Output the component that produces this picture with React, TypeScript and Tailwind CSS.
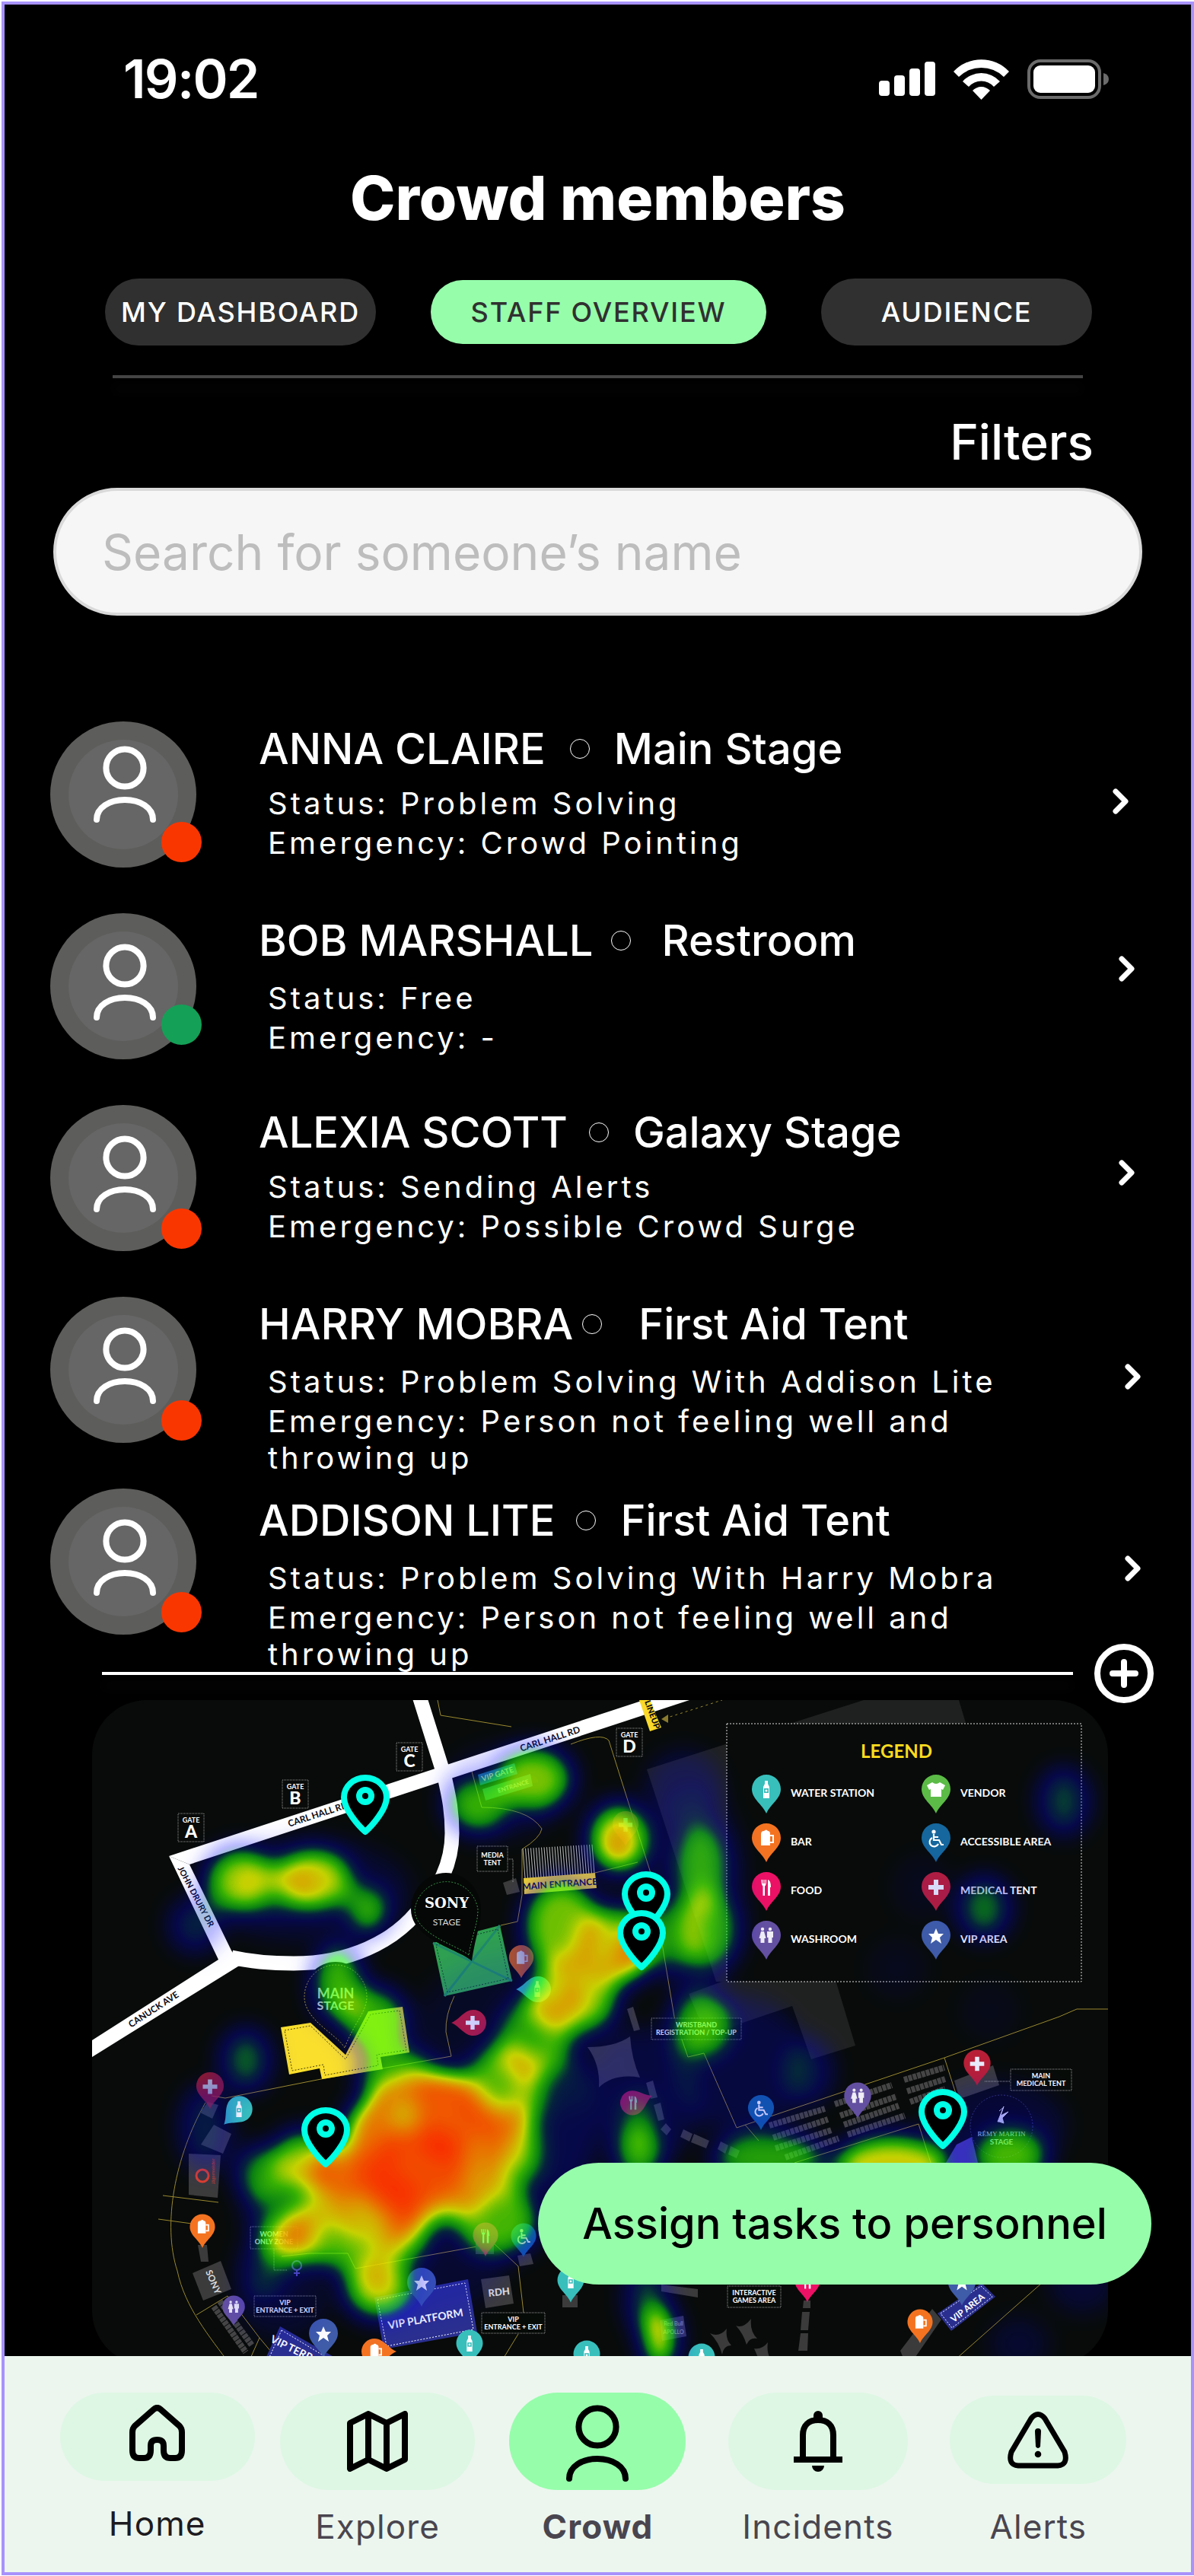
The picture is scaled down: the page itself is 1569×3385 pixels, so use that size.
import React, { useState } from 'react';
import clsx from 'clsx';

type PinKind = 'water' | 'bar' | 'food' | 'washroom' | 'vendor' | 'accessible' | 'medical' | 'vip';

interface Member {
  name: string;
  place: string;
  status: string;
  emergency: string;
  free?: boolean;
  iconClass: string;
  badgeClass: string;
  bodyClass: string;
  dotClass: string;
  detailsClass: string;
  chevronClass: string;
}

const members: Member[] = [
  {
    name: 'ANNA CLAIRE',
    place: 'Main Stage',
    status: 'Problem Solving',
    emergency: 'Crowd Pointing',
    iconClass: 'top-8',
    badgeClass: 'top-33',
    bodyClass: 'pt-0',
    dotClass: 'ml-8 mr-8',
    detailsClass: 'mt-3',
    chevronClass: 'mt-22 mr-4',
  },
  {
    name: 'BOB MARSHALL',
    place: 'Restroom',
    status: 'Free',
    emergency: '-',
    free: true,
    iconClass: 'top-10',
    badgeClass: 'top-30',
    bodyClass: 'pt-0',
    dotClass: 'ml-6 mr-10',
    detailsClass: 'mt-4',
    chevronClass: 'mt-14 mr-2',
  },
  {
    name: 'ALEXIA SCOTT',
    place: 'Galaxy Stage',
    status: 'Sending Alerts',
    emergency: 'Possible Crowd Surge',
    iconClass: 'top-10',
    badgeClass: 'top-34',
    bodyClass: 'pt-0',
    dotClass: 'ml-7 mr-8',
    detailsClass: 'mt-3',
    chevronClass: 'mt-18 mr-2',
  },
  {
    name: 'HARRY MOBRA',
    place: 'First Aid Tent',
    status: 'Problem Solving With Addison Lite',
    emergency: 'Person not feeling well and throwing up',
    iconClass: 'top-10',
    badgeClass: 'top-34',
    bodyClass: 'pt-0',
    dotClass: 'ml-3 mr-12',
    detailsClass: 'mt-4',
    chevronClass: 'mt-22',
  },
  {
    name: 'ADDISON LITE',
    place: 'First Aid Tent',
    status: 'Problem Solving With Harry Mobra',
    emergency: 'Person not feeling well and throwing up',
    iconClass: 'top-10',
    badgeClass: 'top-34',
    bodyClass: 'pt-1.5',
    dotClass: 'ml-7 mr-8',
    detailsClass: 'mt-4',
    chevronClass: 'mt-22',
  },
];

const pinColors: Record<PinKind, string> = {
  water: '#38bfbc',
  bar: '#f47321',
  food: '#ec1164',
  washroom: '#6450a1',
  vendor: '#5bbb46',
  accessible: '#15679d',
  medical: '#b91f36',
  vip: '#3f5ca8',
};

const PersonIcon: React.FC<{ className?: string }> = ({ className }) => (
  <svg viewBox="0 0 82 102" className={clsx('w-[82px]', className)} fill="none" stroke="currentColor" strokeWidth="8" strokeLinecap="round" aria-hidden="true">
    <circle cx="41" cy="29" r="24.6" />
    <path d="M4 97C4 81 21 71 41 71s37 10 37 26" />
  </svg>
);

const StatusBar: React.FC = () => (
  <div className="flex items-center justify-between pt-[58px] pr-[108px] pl-[156px] text-white">
    <span className="text-[70px] leading-[80px] font-semibold tracking-tight">19:02</span>
    <div className="flex items-center gap-6">
      <svg viewBox="0 0 74 46" className="w-[74px]" fill="currentColor" aria-hidden="true">
        <rect x="0" y="25" width="14" height="20" rx="4" />
        <rect x="20" y="18" width="14" height="27" rx="4" />
        <rect x="40" y="9" width="14" height="36" rx="4" />
        <rect x="60" y="0" width="14" height="45" rx="4" />
      </svg>
      <svg viewBox="0 0 73 53" className="w-[73px]" fill="currentColor" aria-hidden="true">
        <path d="M0 16A50 50 0 0 1 73 16L66 23A42 42 0 0 0 7 23z" />
        <path d="M12 29A33 33 0 0 1 61 29L53 36A22 22 0 0 0 20 36z" />
        <path d="M25 41A16 16 0 0 1 48 41L36.5 53z" />
      </svg>
      <svg viewBox="0 0 107 52" className="w-[107px]" aria-hidden="true">
        <rect x="2" y="2" width="93" height="48" rx="15" fill="none" stroke="#6b6b6b" strokeWidth="4" />
        <rect x="8" y="8" width="81" height="36" rx="9" fill="white" />
        <path d="M100 18q7 2 7 8t-7 8z" fill="#6b6b6b" />
      </svg>
    </div>
  </div>
);

const MemberRow: React.FC<{ member: Member }> = ({ member }) => (
  <li className="flex min-h-[252px] items-start">
    <div className="relative h-48 w-48 shrink-0 rounded-full bg-[#5d5d5b] p-6">
      <div className="h-36 w-36 rounded-full bg-[#666666]" />
      <PersonIcon className={clsx('absolute left-[57px] text-white', member.iconClass)} />
      <span
        className={clsx(
          'absolute left-[146px] h-[53px] w-[53px] rounded-full',
          member.free ? 'bg-[#14a057]' : 'bg-[#fa3600]',
          member.badgeClass
        )}
      />
    </div>
    <div className={clsx('ml-[82px] flex-1', member.bodyClass)}>
      <h2 className="flex items-center text-[56px] leading-[72px] font-medium whitespace-nowrap text-white">
        {member.name}
        <span className={clsx('h-[26px] w-[26px] rounded-full border border-white', member.dotClass)} />
        {member.place}
      </h2>
      <div className={clsx('ml-3 max-w-[1000px] text-[40px] leading-[48px] tracking-widest text-white', member.detailsClass)}>
        <p>Status: {member.status}</p>
        <p className="mt-1">Emergency: {member.emergency}</p>
      </div>
    </div>
    <button type="button" aria-label={`Open ${member.name}`} className={clsx('text-white', member.chevronClass)}>
      <svg viewBox="0 0 22 34" className="w-[22px]" fill="none" stroke="currentColor" strokeWidth="7" strokeLinecap="round" strokeLinejoin="round">
        <path d="M4 4l13 13L4 30" />
      </svg>
    </button>
  </li>
);

const PinGlyph: React.FC<{ kind: PinKind }> = ({ kind }) => {
  switch (kind) {
    case 'water':
      return (
        <g>
          <path d="M-2-12h4v4l2 4v15h-8V-4l2-4z" fill="white" />
          <path d="M-3-2h6v6h-6z" fill="#38bfbc" />
          <circle cy="1" r="1.5" fill="white" />
        </g>
      );
    case 'bar':
      return (
        <g>
          <path d="M-7-6q0-4 4-4 3-3 5 0 3 0 3 4v15h-12z" fill="white" />
          <path d="M5-4h4v9h-4" fill="none" stroke="white" strokeWidth="2" />
        </g>
      );
    case 'food':
      return (
        <g fill="white">
          <path d="M-6-10h1.200v5h1.200v-5h1.200v5h1.200v-5h1.200q0 8-2 8.500V11h-2.500V-1.500q-2-1-2-8.500z" />
          <path d="M2-10q4 1 4 10h-1v11H2z" />
        </g>
      );
    case 'washroom':
      return (
        <g fill="white" opacity=".9">
          <circle cx="-5" cy="-9" r="2.200" />
          <path d="M-7-6h4l2.500 9h-2v6h-5V3h-2z" />
          <circle cx="5" cy="-9" r="2.200" />
          <path d="M1-6h8v8h-1.500v7h-5V2H1z" />
        </g>
      );
    case 'vendor':
      return <path d="M-5-10q5 4 10 0l7 4-3 6-2-1v10H-7V-1l-2 1-3-6z" fill="white" />;
    case 'accessible':
      return (
        <g fill="none" stroke="white" strokeWidth="2.200">
          <circle cx="-3" cy="-9" r="1.5" fill="white" />
          <path d="M-3-6v8h7l3 6h3M-3-2h6" />
          <path d="M-5-1a6 6 0 1 0 8 8" />
        </g>
      );
    case 'medical':
      return <path d="M-3-10h6v7h7v6h-7v7h-6v-7h-7v-6h7z" fill="#e9ecfa" />;
    default:
      return <path d="M0-10l3 7h7l-5 5 2 8-7-5-7 5 2-8-5-5h7z" fill="white" />;
  }
};

// Teardrop pin, x/y is the centre of its head
const Pin: React.FC<{ kind: PinKind; x: number; y: number; size?: number; turn?: number; faded?: boolean }> = ({
  kind,
  x,
  y,
  size = 1,
  turn = 0,
  faded,
}) => (
  <g transform={`translate(${x} ${y}) scale(${size})`} opacity={faded ? 0.75 : 1}>
    <path d="M0 31C-5 19-19 12-19-1a19 19 0 0 1 38 0C19 12 5 19 0 31z" fill={pinColors[kind]} transform={`rotate(${turn})`} />
    <PinGlyph kind={kind} />
  </g>
);

const StaffMarker: React.FC<{ x: number; y: number }> = ({ x, y }) => (
  <g transform={`translate(${x} ${y})`}>
    <path d="M0 75C-8 68-28 46-28 30a28 26 0 0 1 56 0C28 46 8 68 0 75z" fill="black" stroke="#00ffe6" strokeWidth="8" strokeLinejoin="round" />
    <circle cy="28" r="8" fill="black" stroke="#00ffe6" strokeWidth="8" />
  </g>
);

const gates = [
  { letter: 'A', x: 113, y: 149 },
  { letter: 'B', x: 250, y: 105 },
  { letter: 'C', x: 400, y: 56 },
  { letter: 'D', x: 689, y: 37 },
];

const tags = [
  { x: 506, y: 192, w: 40, h: 33, lines: ['MEDIA', 'TENT'] },
  { x: 735, y: 418, w: 118, h: 28, lines: ['WRISTBAND', 'REGISTRATION / TOP-UP'] },
  { x: 1207, y: 485, w: 80, h: 28, lines: ['MAIN', 'MEDICAL TENT'] },
  { x: 835, y: 770, w: 70, h: 28, lines: ['INTERACTIVE', 'GAMES AREA'] },
  { x: 213, y: 783, w: 81, h: 27, lines: ['VIP', 'ENTRANCE + EXIT'] },
  { x: 512, y: 805, w: 83, h: 27, lines: ['VIP', 'ENTRANCE + EXIT'] },
  { x: 208, y: 692, w: 62, h: 29, lines: ['WOMEN', 'ONLY ZONE'] },
];

const legend: { kind: PinKind; label: string; x: number; y: number }[] = [
  { kind: 'water', label: 'WATER STATION', x: 886, y: 118 },
  { kind: 'bar', label: 'BAR', x: 886, y: 182 },
  { kind: 'food', label: 'FOOD', x: 886, y: 246 },
  { kind: 'washroom', label: 'WASHROOM', x: 886, y: 310 },
  { kind: 'vendor', label: 'VENDOR', x: 1109, y: 118 },
  { kind: 'accessible', label: 'ACCESSIBLE AREA', x: 1109, y: 182 },
  { kind: 'medical', label: 'MEDICAL TENT', x: 1109, y: 246 },
  { kind: 'vip', label: 'VIP AREA', x: 1109, y: 310 },
];

const pins: { kind: PinKind; x: number; y: number; size?: number; turn?: number; faded?: boolean }[] = [
  { kind: 'bar', x: 564, y: 339, size: 0.85, faded: true },
  { kind: 'water', x: 585, y: 380, size: 0.9, turn: 90 },
  { kind: 'medical', x: 500, y: 424, size: 0.9, turn: 90 },
  { kind: 'medical', x: 701, y: 164, size: 0.9, faded: true },
  { kind: 'medical', x: 155, y: 508, size: 0.95, faded: true },
  { kind: 'water', x: 193, y: 538, size: 0.9, turn: 45 },
  { kind: 'bar', x: 145, y: 693, size: 0.87 },
  { kind: 'washroom', x: 186, y: 798, size: 0.78 },
  { kind: 'vip', x: 433, y: 766 },
  { kind: 'vip', x: 304, y: 833 },
  { kind: 'bar', x: 372, y: 856, size: 0.9, turn: -90 },
  { kind: 'water', x: 496, y: 846, size: 0.92 },
  { kind: 'water', x: 650, y: 860, size: 0.92 },
  { kind: 'water', x: 801, y: 864, size: 0.92 },
  { kind: 'water', x: 629, y: 763, size: 0.92 },
  { kind: 'food', x: 517, y: 704, size: 0.87 },
  { kind: 'accessible', x: 567, y: 705, size: 0.87 },
  { kind: 'food', x: 711, y: 529, size: 0.85, turn: -110, faded: true },
  { kind: 'accessible', x: 879, y: 537, size: 0.9 },
  { kind: 'washroom', x: 1006, y: 521, size: 0.93 },
  { kind: 'medical', x: 1163, y: 478, size: 0.93 },
  { kind: 'bar', x: 1088, y: 818, size: 0.87 },
  { kind: 'food', x: 940, y: 764, size: 0.87 },
  { kind: 'vip', x: 1143, y: 766, size: 0.95 },
];

// [x, y, rx, ry, strength]
const heat: [number, number, number, number, number][] = [
  [193, 236, 46, 44, 0.62],
  [292, 236, 52, 42, 0.7],
  [363, 276, 28, 34, 0.56],
  [240, 244, 60, 40, 0.3],
  [280, 250, 140, 70, 0.14],
  [135, 296, 34, 36, 0.36],
  [582, 103, 52, 44, 0.64],
  [506, 139, 42, 38, 0.56],
  [540, 120, 80, 60, 0.14],
  [323, 372, 34, 52, 0.62],
  [371, 420, 44, 44, 0.6],
  [202, 473, 34, 42, 0.46],
  [692, 182, 42, 48, 0.74],
  [690, 190, 20, 22, 0.45],
  [617, 296, 52, 62, 0.68],
  [631, 389, 62, 52, 0.66],
  [631, 389, 18, 24, 0.6],
  [690, 322, 52, 54, 0.66],
  [704, 335, 28, 32, 0.6],
  [760, 310, 50, 46, 0.36],
  [800, 219, 36, 60, 0.52],
  [808, 303, 44, 54, 0.5],
  [777, 116, 50, 50, 0.2],
  [790, 250, 70, 140, 0.14],
  [1277, 133, 34, 44, 0.42],
  [1172, 273, 36, 42, 0.48],
  [1058, 353, 40, 40, 0.07],
  [1090, 246, 40, 44, 0.07],
  [1179, 409, 40, 40, 0.06],
  [800, 425, 42, 46, 0.56],
  [850, 480, 90, 90, 0.2],
  [940, 489, 34, 44, 0.3],
  [580, 445, 50, 56, 0.52],
  [540, 513, 52, 64, 0.6],
  [546, 590, 44, 58, 0.6],
  [546, 590, 15, 28, 0.42],
  [533, 683, 56, 50, 0.64],
  [399, 493, 50, 42, 0.56],
  [437, 590, 106, 104, 0.7],
  [466, 545, 44, 62, 0.72],
  [430, 616, 70, 54, 0.78],
  [367, 572, 40, 50, 0.58],
  [322, 621, 36, 34, 0.78],
  [278, 604, 44, 40, 0.68],
  [380, 670, 56, 52, 0.6],
  [416, 704, 30, 34, 0.56],
  [376, 770, 48, 46, 0.64],
  [376, 763, 18, 20, 0.5],
  [340, 690, 80, 60, 0.4],
  [256, 709, 38, 36, 0.6],
  [258, 709, 17, 20, 0.55],
  [300, 702, 50, 48, 0.4],
  [292, 652, 50, 46, 0.4],
  [220, 623, 32, 38, 0.52],
  [229, 672, 28, 40, 0.3],
  [225, 748, 32, 44, 0.3],
  [149, 562, 34, 56, 0.34],
  [608, 553, 60, 100, 0.26],
  [560, 440, 140, 110, 0.1],
  [718, 596, 32, 40, 0.56],
  [718, 543, 28, 34, 0.3],
  [730, 520, 70, 90, 0.2],
  [890, 602, 76, 36, 0.58],
  [1051, 612, 78, 42, 0.76],
  [1207, 602, 50, 42, 0.58],
  [1190, 560, 90, 60, 0.16],
  [746, 838, 24, 44, 0.78],
  [729, 786, 28, 50, 0.42],
  [430, 750, 110, 60, 0.14],
  [250, 790, 60, 50, 0.14],
  [1301, 766, 44, 40, 0.16],
  [1218, 846, 40, 36, 0.14],
];

const stands = [
  [890, 559, 963, 537],
  [895, 575, 967, 551],
  [898, 589, 972, 565],
  [911, 601, 981, 576],
  [976, 531, 1051, 506],
  [983, 546, 1057, 521],
  [988, 558, 1060, 533],
  [993, 571, 1068, 546],
  [1067, 499, 1120, 483],
  [1071, 514, 1121, 498],
  [1075, 528, 1121, 511],
];

const VenueMap: React.FC = () => (
  <svg viewBox="0 0 1335 874" className="block w-full rounded-[72px] bg-[#080b09] font-['Lato',sans-serif]" role="img" aria-label="Venue crowd heat map">
    <defs>
      <filter id="heat" x="0" y="0" width="1335" height="874" filterUnits="userSpaceOnUse" colorInterpolationFilters="sRGB">
        <feGaussianBlur stdDeviation="15" />
        <feColorMatrix values="0 0 0 1 0  0 0 0 1 0  0 0 0 1 0  0 0 0 1 0" />
        <feComponentTransfer>
          <feFuncR type="table" tableValues="0 0 0 0 0.05 0.3 0.9 0.95 1" />
          <feFuncG type="table" tableValues="0 0 0 0.3 0.9 1 0.95 0.5 0.1" />
          <feFuncB type="table" tableValues="1 1 1 0.6 0.1 0 0 0 0" />
          <feFuncA type="table" tableValues="0 0.14 0.26 0.36 0.54 0.68 0.86 0.95 1" />
        </feComponentTransfer>
      </filter>
    </defs>

    {/* car parks */}
    <g fill="#1f2120">
      <path d="M729 91L1014 0h125l12 40v330H820z" />
      <path d="M784 386l49-18h144l26 86-58 18-25-70-62 21-50 20z" />
    </g>

    {/* roads */}
    <path d="M101 205L725 0h60L128 216z" fill="white" />
    <path d="M101 205l27 11 55 113 12 19-142 88-53 33v-22l166-106z" fill="white" />
    <path d="M183 338C205 343 235 346 265 346c75 0 130-30 160-65 32-32 48-66 48-106 0-35-6-55-10-75L430-5" fill="none" stroke="white" strokeWidth="19" />
    <g fill="#0a0a14" fontSize="12" fontWeight="700" textAnchor="middle">
      <text transform="translate(298 154) rotate(-18)">CARL HALL RD</text>
      <text transform="translate(603 55) rotate(-18)">CARL HALL RD</text>
      <text transform="translate(133 260) rotate(62)" fontSize="11">JOHN DRURY DR</text>
      <text transform="translate(83 410) rotate(-33)">CANUCK AVE</text>
    </g>

    {/* site outline */}
    <g fill="none" stroke="#9a8830" strokeWidth="1">
      <path d="M454 0l4 20 93 15M629 58q40-16 50-5l54 171 32 192 10 30 8 23 21-5 43 98 273-92 151-54 23-10h41" />
      <path d="M499 94l13 47q60 0 79 28-2 12-26 27v60l-6 35-22 5M661 227l56-14M476 389q-12 25-11 47l7 32-171 30-126 25-18-3" />
      <path d="M149 529c-40 70-57 160-37 221 10 48 42 86 70 124M93 651l73 9M87 682l44 6M137 808l41-25 42 55-16 36M220 838l30 36" />
      <path d="M249 731l37-4h50l10 20 182-33 32 30 7 61M560 833l-25 41M858 558l18 21M923 608l163-51 16 51M1120 470l16 50M1248 766l-122 108" />
    </g>
    <path d="M753 24L828 0" stroke="#9a8830" strokeDasharray="3 4" />
    <path d="M748 25l9-6v11z" fill="#8a7a2e" />
    <path d="M719 0h14l15 36-15 5z" fill="#f9d92a" />
    <text transform="translate(726 2) rotate(70)" fontSize="11" fontWeight="900" fill="#111">LINEUP</text>

    {/* vendors and tents */}
    <g fill="#3b3b3b">
      <path d="M651 456q36 0 56-14 2 30 13 54-34-6-54 13 2-30-15-53z" />
      <path d="M703 406l8-3 9 30-8 2zM728 503l9-3 6 22-9 2zM738 532l9-3 5 22-8 2zM754 556l7 8-6 8-8-8zM777 564l12 6-4 10-12-6zM791 570l20 9-4 10-20-8zM826 580l10 5-4 11-10-6zM839 586l12 6-4 10-11-5z" />
      <path d="M748 768l48 6v11l-48-8zM935 789h9v10h-10zM933 804h10l-2 24h-10zM931 832h10l-1 23h-12z" />
      <path d="M812 832q12 6 22-6-2 14 6 22-10 0-12 12-4-16-16-28zM846 822q10 4 20-9-2 16 8 26-10-2-14 8-4-14-14-25zM870 852q10 2 18-8-2 14 4 22h-16zM1062 855l42-55 12 14-36 52-10 8z" />
      <path d="M132 753l37-16 14 37-37 15zM511 761l37-5 6 37-37 6zM139 716h12l2 22h-10zM504 708h24v20h-24zM559 730l17-3 4 14-18 3zM618 782h20v16h-20zM1133 500l51-20 8 26-52 18z" />
      <path d="M127 596l42 2-4 56-38-4zM160 558l23 12-11 26-29-12zM152 528l14 4-8 18-16-8zM540 240l17-6 5 18-17 4z" />
    </g>
    <g stroke="#454545" strokeWidth="8" strokeDasharray="5 1">
      {stands.map(([x1, y1, x2, y2]) => (
        <line key={`${x1}-${y1}`} x1={x1} y1={y1} x2={x2} y2={y2} />
      ))}
      <path d="M160 797l42 60M168 790l42 58" />
    </g>
    <circle cx="145" cy="625" r="8" fill="none" stroke="#e0402a" strokeWidth="3" />
    <text transform="translate(161 636) rotate(-90)" fontSize="6" fill="#e0402a">Jägermeister</text>
    <text transform="translate(149 751) rotate(67)" fontSize="12" fontWeight="700" fill="#ddd">SONY</text>
    <text transform="translate(521 784) rotate(-6)" fontSize="13" fontWeight="900" fill="#ddd">RDH</text>
    <path d="M746 815l31-6 4 27-32 6z" fill="#3b3b4b" />
    <text x="764" y="822" fontSize="7" fill="#bbb" textAnchor="middle">Red Bull</text>
    <text x="764" y="833" fontSize="7" fill="#bbb" textAnchor="middle">APOLLO</text>

    {/* entrances */}
    <path d="M507 98l48-15 4 14-49 15z" fill="#1f6f9f" />
    <path d="M513 117l63-20 3 16-62 19z" fill="#2b7a5c" />
    <g fill="#d8ecd8" fontSize="10" fontWeight="700">
      <text transform="translate(513 107) rotate(-17)">VIP GATE</text>
      <text transform="translate(534 122) rotate(-17)" fontSize="8">ENTRANCE</text>
    </g>
    <g stroke="#bbb" strokeWidth="1">
      {Array.from({ length: 27 }, (_, i) => (
        <line key={i} x1={566 + i * 3.5} y1={195 - i * 0.2} x2={569 + i * 3.5} y2={234 - i * 0.2} />
      ))}
    </g>
    <path d="M567 234l94-7 2 20-95 8z" fill="#f4d62c" />
    <text transform="translate(615 246) rotate(-4)" fontSize="12" fontWeight="700" fill="#10103c" textAnchor="middle">MAIN ENTRANCE</text>

    {/* stages */}
    <path d="M448 319l88-23 16 73-89 20z" fill="#2fa050" />
    <path d="M448 319l104 50M536 296l-73 93" stroke="#1f8a6a" strokeWidth="3" />
    <path d="M452 322l81-21 14 65-80 18z" fill="none" stroke="#0f4434" strokeDasharray="2 2" />
    <path d="M248 430l39-6 46 42 30-57 45-6 9 60-38 6 3 16-80 13-3-14-40 8z" fill="#fadf2c" />
    <path d="M253 434l34-6 46 44 33-59 38-5 9 52-39 6 2 14-70 13-2-14-41 8z" fill="none" stroke="#4a420c" strokeDasharray="2 2" />
    <path d="M333 466c-10-20-56-38-56-76a43 46 0 0 1 86 0c0 22-18 40-30 76z" fill="#080b09" />
    <path d="M332 457c-10-18-53-36-53-67a41 42 0 0 1 82 0c0 20-18 36-29 67z" fill="none" stroke="#b9a83a" strokeDasharray="2 2" />
    <g fill="#f0f0dc" fontSize="18" fontWeight="700" textAnchor="middle">
      <text x="320" y="392">MAIN</text>
      <text x="320" y="407" fontSize="16">STAGE</text>
    </g>
    <circle cx="1195" cy="560" r="41" fill="#07080c" stroke="#3c3c78" strokeDasharray="2 2" />
    <path d="M1190 554l8-20-4 12 10-5-8 8 2 7-6-2zM1192 540l6-5" fill="#d8d8f4" stroke="#d8d8f4" />
    <text x="1195" y="573" textAnchor="middle" fontSize="9" fill="#d8d8f4" className="font-['Liberation_Serif',serif]">RÉMY MARTIN</text>
    <text x="1195" y="584" textAnchor="middle" fontSize="10" fontWeight="700" fill="#d8d8f4">STAGE</text>
    <path d="M1136 584l20-10 8 34h-42z" fill="#4a3fa8" />

    {/* VIP decks */}
    <g fill="#2a2f8f">
      <path d="M371 785l123-24 12 70-123 22zM247 823l90 51H224zM1111 806l58-40 18 18-58 45z" />
    </g>
    <g fill="none" stroke="white" strokeDasharray="2 2">
      <path d="M375 788l115-22 11 61-114 22zM249 828l76 46M249 828l-18 40M1115 806l53-36 15 14-53 41z" />
    </g>
    <g fill="white" fontWeight="700" textAnchor="middle">
      <text transform="translate(439 818) rotate(-10)" fontSize="14">VIP PLATFORM</text>
      <text transform="translate(272 862) rotate(26)" fontSize="14">VIP TERRACE</text>
      <text transform="translate(1153 802) rotate(-38)" fontSize="12">VIP AREA</text>
    </g>

    {pins.map((pin) => (
      <Pin key={`${pin.kind}-${pin.x}`} {...pin} />
    ))}

    {gates.map((gate) => (
      <g key={gate.letter} fill="white" textAnchor="middle" fontWeight="700">
        <rect x={gate.x} y={gate.y} width="34" height="37" fill="#080b09" stroke="#999" strokeDasharray="1 1" />
        <text x={gate.x + 17} y={gate.y + 12} fontSize="9">GATE</text>
        <text x={gate.x + 17} y={gate.y + 32} fontSize="23" fontWeight="900">{gate.letter}</text>
      </g>
    ))}

    {tags.map((tag) => (
      <g key={`${tag.x}-${tag.y}`} fill="white" textAnchor="middle" fontWeight="700" fontSize="9">
        <rect x={tag.x} y={tag.y} width={tag.w} height={tag.h} fill="#080b09" fillOpacity=".8" stroke="#999" strokeDasharray="1 1" />
        <text x={tag.x + tag.w / 2} y={tag.y + tag.h / 2 - 2}>{tag.lines[0]}</text>
        <text x={tag.x + tag.w / 2} y={tag.y + tag.h / 2 + 8}>{tag.lines[1]}</text>
      </g>
    ))}
    <g fill="none" stroke="#aaa">
      <path d="M546 209h7v30M239 721v28h18M1173 501h34" strokeDasharray="1 1" />
      <circle cx="269" cy="743" r="6" stroke="#6a50c0" strokeWidth="2" />
      <path d="M269 749v8M265 753h8" stroke="#6a50c0" strokeWidth="2" />
    </g>

    {/* legend */}
    <rect x="834" y="31" width="466" height="339" fill="#080b09" stroke="#ddd" strokeDasharray="2 2" />
    <text x="1057" y="76" textAnchor="middle" fontSize="24" fontWeight="700" fill="#fadb1e">LEGEND</text>
    {legend.map((item) => (
      <g key={item.kind}>
        <Pin kind={item.kind} x={item.x} y={item.y} />
        <text x={item.x + 32} y={item.y + 9} fontSize="14" fontWeight="700" fill="white">{item.label}</text>
      </g>
    ))}

    <g filter="url(#heat)">
      {heat.map(([x, y, rx, ry, strength], i) => (
        <ellipse key={i} cx={x} cy={y} rx={rx} ry={ry} fillOpacity={strength} />
      ))}
    </g>

    <path d="M499 343c-15-15-80-28-80-68a46 48 0 0 1 92 0c0 20-8 38-12 68z" fill="#050706" />
    <path d="M495 335c-15-13-71-27-71-60a42 43 0 0 1 83 0c0 20-8 34-12 60z" fill="none" stroke="#3a9a4a" strokeDasharray="2 2" />
    <text x="466" y="273" textAnchor="middle" fontSize="18" fontWeight="700" fill="white" className="font-['DejaVu_Serif',serif]">SONY</text>
    <text x="466" y="296" textAnchor="middle" fontSize="12" fill="#ddd">STAGE</text>

    <StaffMarker x={359} y={98} />
    <StaffMarker x={728} y={225} />
    <StaffMarker x={722} y={276} />
    <StaffMarker x={307} y={535} />
    <StaffMarker x={1118} y={511} />
  </svg>
);

const HomeIcon = () => (
  <svg viewBox="0 0 73 74" className="w-[73px]" fill="none" stroke="currentColor" strokeWidth="8">
    <path d="M32 6q4.500-4 9 0l25 22q3 3 3 8v24q0 10-9 10h-6q-9 0-9-10v-6q0-8-8.500-8T28 54v6q0 10-9 10h-6q-9 0-9-10V36q0-5 3-8z" />
  </svg>
);

const ExploreIcon = () => (
  <svg viewBox="0 0 80 80" className="w-20" fill="none" stroke="currentColor" strokeWidth="8" strokeLinejoin="round">
    <path d="M4 16L28 4l24 12L76 4v60L52 76 28 64 4 76zM28 4v60M52 16v60" />
  </svg>
);

const IncidentsIcon = () => (
  <svg viewBox="0 0 64 80" className="w-16" fill="currentColor">
    <rect x="26" y="0" width="12" height="16" rx="6" />
    <path d="M12 62V32c0-13 8-20 20-20s20 7 20 20v30" fill="none" stroke="currentColor" strokeWidth="8" />
    <path d="M0 60h64v8H0zM24 72h16a8 8 0 0 1-16 0z" />
  </svg>
);

const AlertsIcon = () => (
  <svg viewBox="0 0 80 75" className="w-20" fill="currentColor">
    <path d="M31 9q9-11 18 0l26 44q5 17-9 18H14Q0 70 5 53z" fill="none" stroke="currentColor" strokeWidth="7" />
    <path d="M36 26q0-4 4-4t4 4l-1 20q-3 4-6 0z" />
    <circle cx="40" cy="56" r="4.300" />
  </svg>
);

const navItems = [
  { label: 'Home', Icon: HomeIcon, slot: 'h-31', pill: 'h-29 w-64 items-center pb-2.5', text: 'text-[#1d1b20]' },
  { label: 'Explore', Icon: ExploreIcon, slot: 'h-32', pill: 'h-32 w-64 items-center', text: 'text-[#49454f]' },
  { label: 'Crowd', Icon: PersonIcon, slot: 'h-32', pill: 'h-32 w-58 items-start pt-4', text: 'text-[#49454f]' },
  { label: 'Incidents', Icon: IncidentsIcon, slot: 'h-32', pill: 'h-32 w-59 items-center', text: 'text-[#49454f]' },
  { label: 'Alerts', Icon: AlertsIcon, slot: 'h-32 pt-1', pill: 'h-29 w-58 items-center', text: 'text-[#49454f]' },
];

const tabs = [
  { label: 'MY DASHBOARD', size: 'h-22 w-[356px]' },
  { label: 'STAFF OVERVIEW', size: 'h-21 w-[441px]' },
  { label: 'AUDIENCE', size: 'h-22 w-[356px]' },
];

export default function App() {
  const [activeTab, setActiveTab] = useState('STAFF OVERVIEW');
  const [search, setSearch] = useState('');

  return (
    <div className="min-h-screen bg-white pt-0.5 pl-0.5 font-['Inter',sans-serif]">
      <div className="border-4 border-[#a892fb] bg-black">
        <StatusBar />

        <h1 className="mt-[68px] text-center text-[80px] leading-[96px] font-extrabold text-white">Crowd members</h1>

        <div className="mt-[58px] flex items-center justify-between pr-[130px] pl-[132px]">
          {tabs.map((tab) => (
            <button
              key={tab.label}
              type="button"
              onClick={() => setActiveTab(tab.label)}
              className={clsx(
                'rounded-full text-[36px] font-medium tracking-wider whitespace-nowrap',
                tab.size,
                activeTab === tab.label ? 'bg-[#96fdab] text-[#303030]' : 'bg-[#303030] text-white'
              )}
            >
              {tab.label}
            </button>
          ))}
        </div>

        <div className="mx-[142px] mt-[39px] h-1 bg-[#444444] shadow-[0_16px_16px_rgba(255,255,255,0.05)]" />

        <div className="mt-11 flex justify-end pr-[128px]">
          <button type="button" className="text-[64px] leading-[80px] font-medium text-white">
            Filters
          </button>
        </div>

        <div className="mx-16 mt-5">
          <input
            type="text"
            aria-label="Search for someone’s name"
            placeholder="Search for someone’s name"
            value={search}
            onChange={(e) => setSearch(e.target.value)}
            className="h-42 w-full rounded-full border-4 border-[#d9d9d9] bg-[#f6f6f6] px-[60px] text-[64px] text-black placeholder:text-[#bdbdbd]"
          />
        </div>

        <ul className="mt-[139px] pr-[65px] pl-[60px]">
          {members.map((member) => (
            <MemberRow key={member.name} member={member} />
          ))}
        </ul>

        <div className="-mt-12 flex items-center gap-7 pr-[49px] pl-32">
          <div className="h-1 flex-1 bg-white shadow-[0_16px_16px_rgba(255,255,255,0.05)]" />
          <button type="button" aria-label="Add crowd member" className="text-white">
            <svg viewBox="0 0 78 78" className="w-[78px]" fill="none" stroke="currentColor" strokeWidth="8" strokeLinecap="round">
              <circle cx="39" cy="39" r="35" />
              <path d="M39 24v30M24 39h30" />
            </svg>
          </button>
        </div>

        <div className="relative -mt-1 pr-[109px] pl-[115px]">
          <VenueMap />
          <button
            type="button"
            className="absolute right-[52px] bottom-[106px] h-40 w-[806px] rounded-full bg-[#96fdab] text-[56px] font-medium text-black"
          >
            Assign tasks to personnel
          </button>
        </div>

        <nav className="relative -mt-3 grid grid-cols-5 bg-[#ecf6ee] px-14 pt-12 pb-8">
          {navItems.map(({ label, Icon, slot, pill, text }) => (
            <a key={label} href={`#${label.toLowerCase()}`} className="flex flex-col items-center text-black">
              <span className={slot}>
                <span
                  className={clsx(
                    'flex justify-center rounded-full',
                    pill,
                    label === 'Crowd' ? 'bg-[#96fdab]' : 'bg-[#def7e4]'
                  )}
                >
                  <Icon />
                </span>
              </span>
              <span className={clsx('mt-5 text-[44px] leading-[56px] tracking-wide', text, label === 'Crowd' && 'font-bold')}>
                {label}
              </span>
            </a>
          ))}
        </nav>
      </div>
    </div>
  );
}
